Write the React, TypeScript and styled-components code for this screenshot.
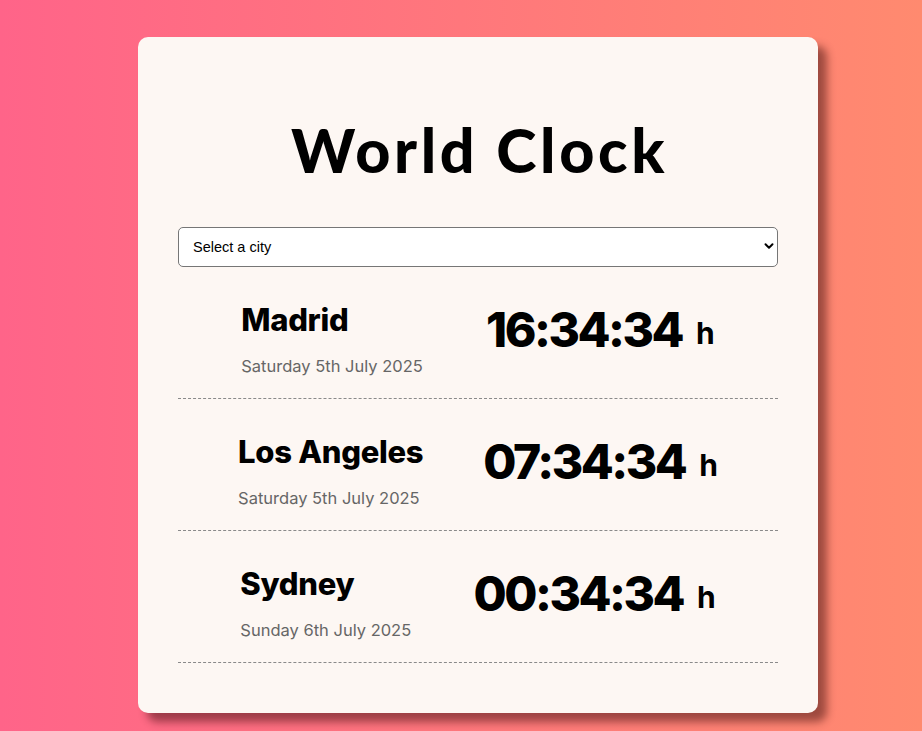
import React from "react";
import styled, { createGlobalStyle } from "styled-components";
import { ChevronDown } from "lucide-react";

const GlobalStyle = createGlobalStyle`
  html, body { margin: 0; padding: 0; }
  body {
    min-height: 100vh;
    background: linear-gradient(90deg, #ff6489 0%, #ff8a6f 100%);
    font-family: "Inter", "Liberation Sans", sans-serif;
  }
`;

const Page = styled.div`
  min-height: 100vh;
  box-sizing: border-box;
  padding: 37px 0 0 138px;
`;

const Card = styled.main`
  width: 680px;
  height: 676px;
  box-sizing: border-box;
  padding: 75px 40px 0;
  background: #fdf7f3;
  border-radius: 10px;
  box-shadow: 9px 9px 8px rgba(40, 0, 0, 0.45);
`;

const Title = styled.h1`
  margin: 0 0 39px;
  padding-left: 3px;
  font-family: "Lato", "DejaVu Sans", sans-serif;
  font-weight: 900;
  font-size: 61px;
  line-height: 76px;
  letter-spacing: 3.6px;
  text-align: center;
  color: #000;
`;

const SelectWrap = styled.div`
  position: relative;
  height: 40px;
`;

const CitySelect = styled.select`
  appearance: none;
  width: 100%;
  height: 40px;
  box-sizing: border-box;
  padding: 0 14px;
  border: 1px solid #767676;
  border-radius: 5px;
  background: #fff;
  font-family: "Liberation Sans", Arial, sans-serif;
  font-size: 14.5px;
  color: #000;
`;

const Chevron = styled.span`
  position: absolute;
  right: 2px;
  top: 12px;
  display: flex;
  pointer-events: none;
  color: #000;
`;

const Row = styled.div`
  display: flex;
  justify-content: space-evenly;
  align-items: flex-start;
  height: 132px;
  box-sizing: border-box;
  padding-top: 35px;
  border-bottom: 1px dashed #8a8a8a;
`;

const CityBlock = styled.div`
  display: flex;
  flex-direction: column;
`;

const CityName = styled.h2`
  margin: 0;
  font-size: 31px;
  line-height: 36px;
  font-weight: 800;
  letter-spacing: -0.3px;
  color: #000;
`;

const CityDate = styled.div`
  margin-top: 16px;
  font-size: 16.5px;
  line-height: 24px;
  color: #666;
`;

const Time = styled.div`
  font-size: 48px;
  line-height: 56px;
  font-weight: 800;
  letter-spacing: -2.5px;
  color: #000;
  white-space: nowrap;
`;

const Unit = styled.small`
  margin-left: 14px;
  font-size: 30px;
  font-weight: 700;
  letter-spacing: 0;
  vertical-align: 3px;
`;

const cities = [
  { name: "Madrid", date: "Saturday 5th July 2025", time: "16:34:34" },
  { name: "Los Angeles", date: "Saturday 5th July 2025", time: "07:34:34" },
  { name: "Sydney", date: "Sunday 6th July 2025", time: "00:34:34" },
];

export default function App() {
  return (
    <>
      <GlobalStyle />
      <Page>
        <Card>
          <Title>World Clock</Title>
          <SelectWrap>
            <CitySelect defaultValue="">
              <option value="">Select a city</option>
              <option value="current">My current location</option>
              <option value="tokyo">Tokyo</option>
              <option value="paris">Paris</option>
            </CitySelect>
            <Chevron>
              <ChevronDown size={14} strokeWidth={3.4} />
            </Chevron>
          </SelectWrap>
          {cities.map((c) => (
            <Row key={c.name}>
              <CityBlock>
                <CityName>{c.name}</CityName>
                <CityDate>{c.date}</CityDate>
              </CityBlock>
              <Time>
                {c.time}
                <Unit>h</Unit>
              </Time>
            </Row>
          ))}
        </Card>
      </Page>
    </>
  );
}
